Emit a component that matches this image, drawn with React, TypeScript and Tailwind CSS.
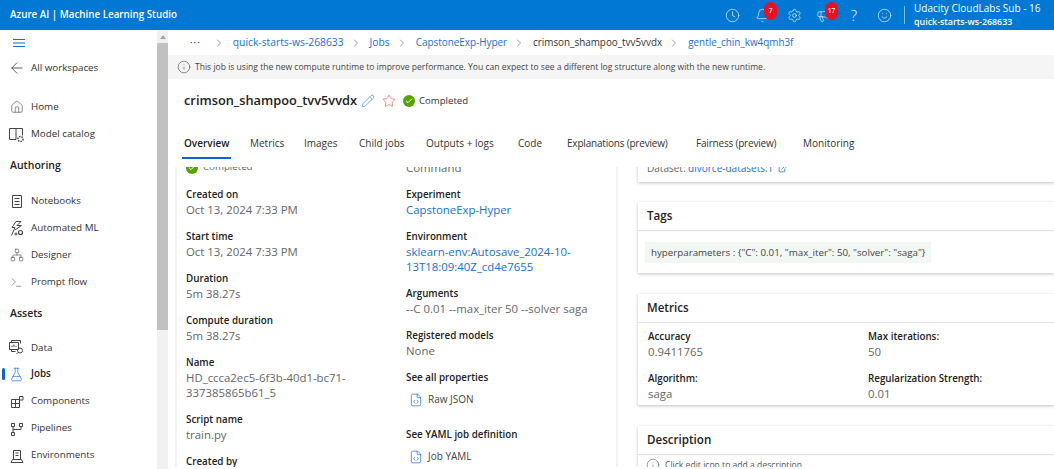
import {
  ArrowLeft,
  Bell,
  Check,
  ChevronDown,
  ChevronRight,
  Clock,
  ExternalLink,
  FileCode,
  FlaskConical,
  Home,
  Info,
  Megaphone,
  Network,
  Pencil,
  Settings,
  Smile,
  Star,
  Terminal,
} from "lucide-react";
import type { ReactNode } from "react";

const HamburgerIcon = () => (
  <svg className="ml-[13px] mt-[4px]" width="12" height="18" viewBox="0 0 12 18" fill="none" stroke="#0f62d6" strokeWidth="1">
    <path d="M0 5.5h12M0 9h12M0 12.5h12" />
  </svg>
);

const ModelCatalogIcon = () => (
  <svg width="17" height="17" viewBox="0 0 17 17" fill="none" stroke="#444" strokeWidth="1">
    <path d="M8 13.5H1.5v-11h6.5v11M8 2.5h6.5v7" />
    <circle cx="12.5" cy="13" r="2.5" strokeDasharray="1.5 1" strokeWidth="1.5" />
  </svg>
);

const NotebookIcon = () => (
  <svg width="16" height="16" viewBox="0 0 16 16" fill="none" stroke="#444" strokeWidth="1">
    <path d="M3.5 2.5h9v12h-9zM5.5 5.5h5M5.5 8.5h5M5.5 11.5h5" />
  </svg>
);

const AutomatedIcon = () => (
  <svg width="17" height="17" viewBox="0 0 17 17" fill="none" stroke="#444" strokeWidth="1">
    <path d="M8 1.5 4 7.5h3l-3.5 8M8 1.5h5l-4 4h4.5L7 10" />
    <circle cx="12.5" cy="12.5" r="2" strokeWidth="1.2" />
    <circle cx="8" cy="14" r="1" />
  </svg>
);

const DataIcon = () => (
  <svg width="17" height="17" viewBox="0 0 17 17" fill="none" stroke="#444" strokeWidth="1">
    <path d="M3.5 3.5v-2h9v3M1.5 3.5h9v7h-9zM3.5 10.5v2h4M4 8V6.5M6 8V5.5M8 8V7" />
    <circle cx="12" cy="11.5" r="2.5" />
    <path d="M10 13.5 8.5 15" />
  </svg>
);

const ComponentsIcon = () => (
  <svg width="16" height="16" viewBox="0 0 16 16" fill="none" stroke="#444" strokeWidth="1">
    <path d="M2.5 5.5h8v8h-8zM6.5 5.5v8M2.5 9.5h8M10.5 2.5h3.5v3.5h-3.5z" />
  </svg>
);

const PipelinesIcon = () => (
  <svg width="16" height="16" viewBox="0 0 16 16" fill="none" stroke="#444" strokeWidth="1">
    <path d="M2.5 2.5h3v3h-3zM10.5 2.5h3v3h-3zM2.5 11.5h3v3h-3zM4 5.5v6M4 8.5h8v-3" />
  </svg>
);

const EnvironmentsIcon = () => (
  <svg width="16" height="16" viewBox="0 0 16 16" fill="none" stroke="#444" strokeWidth="1">
    <path d="M4.5 2.5h7v9h-7zM6.5 5h3M6.5 7.5h3M2 14.5h12l-1.5-3h-9z" />
  </svg>
);

type NavItemProps = { icon: ReactNode; label: string; active?: boolean };

const NavItem = ({ icon, label, active }: NavItemProps) => (
  <div className="relative flex h-[27px] items-center pl-[7px]">
    {active && <div className="absolute left-[2px] top-[7px] h-[12px] w-[3px] rounded-full bg-[#0f62d6]" />}
    <div className="flex w-[19px] justify-center">{icon}</div>
    <span className={`ml-[5px] text-[9.8px] ${active ? "font-semibold text-[#222]" : "text-[#333]"}`}>{label}</span>
  </div>
);

const Sidebar = () => (
  <div className="flex w-[157px] shrink-0 flex-col">
    <HamburgerIcon />
    <div className="mt-[8px] flex h-[16px] items-center pl-[8px]">
      <ArrowLeft size={18} strokeWidth={1} className="text-[#333]" />
      <span className="ml-[5px] text-[9.8px] text-[#333]">All workspaces</span>
    </div>
    <div className="mt-[18px]">
      <NavItem icon={<Home size={14} strokeWidth={1} className="text-[#444]" />} label="Home" />
      <NavItem icon={<ModelCatalogIcon />} label="Model catalog" />
    </div>
    <div className="mb-[15px] mt-[10px] pl-[10px] text-[10.5px] font-semibold leading-[15px] text-[#222]">Authoring</div>
    <NavItem icon={<NotebookIcon />} label="Notebooks" />
    <NavItem icon={<AutomatedIcon />} label="Automated ML" />
    <NavItem icon={<Network size={14} strokeWidth={1} className="text-[#444]" />} label="Designer" />
    <NavItem icon={<Terminal size={13} strokeWidth={1} className="text-[#444]" />} label="Prompt flow" />
    <div className="mb-[14px] mt-[10px] pl-[10px] text-[10.5px] font-semibold leading-[15px] text-[#222]">Assets</div>
    <NavItem icon={<DataIcon />} label="Data" />
    <NavItem icon={<FlaskConical size={15} strokeWidth={1} className="text-[#0f62d6]" />} label="Jobs" active />
    <NavItem icon={<ComponentsIcon />} label="Components" />
    <NavItem icon={<PipelinesIcon />} label="Pipelines" />
    <NavItem icon={<EnvironmentsIcon />} label="Environments" />
  </div>
);

const Field = ({ label, children }: { label: string; children: ReactNode }) => (
  <div className="mb-[12px] leading-[15px]">
    <div className="text-[9.8px] font-semibold text-[#222]">{label}</div>
    <div className="text-[11.4px] text-[#666]">{children}</div>
  </div>
);

const Link = ({ children }: { children: ReactNode }) => <span className="text-[#1a6ed8]">{children}</span>;

const Crumb = ({ children, current, wide }: { children: ReactNode; current?: boolean; wide?: boolean }) => (
  <>
    <ChevronRight size={12} strokeWidth={1} className="ml-[6px] shrink-0 text-[#333]" />
    <span className={`ml-[8px] ${current ? "text-[#333]" : ""} ${wide ? "text-[10.3px]" : ""}`}>{children}</span>
  </>
);

const FileLink = ({ label }: { label: string }) => (
  <div className="flex h-[15px] items-center pl-[3px] text-[10px] text-[#444]">
    <FileCode size={14} strokeWidth={1.2} className="text-[#1a6ed8]" />
    <span className="ml-[5px]">{label}</span>
  </div>
);

const Card = ({ title, className, children }: { title: string; className: string; children: ReactNode }) => (
  <div className={`mb-[21px] bg-white shadow-[0_1px_3px_rgba(0,0,0,0.25)] ${className}`}>
    <div className="flex h-[29px] items-center border-b border-[#e1dfdd] pl-[9px] text-[11.6px] font-semibold text-[#222]">
      {title}
    </div>
    {children}
  </div>
);

const tabs = [
  "Overview",
  "Metrics",
  "Images",
  "Child jobs",
  "Outputs + logs",
  "Code",
  "Explanations (preview)",
  "Fairness (preview)",
  "Monitoring",
];

const Badge = ({ children }: { children: ReactNode }) => (
  <span className="absolute left-[17px] top-[2px] flex h-[18px] w-[13px] items-center justify-center rounded-full bg-[#e81123] text-[6.5px] font-semibold">
    {children}
  </span>
);

export default function App() {
  return (
    <div className="flex h-[469px] w-[1054px] flex-col overflow-hidden bg-white font-['Open_Sans',sans-serif]">
      <header className="flex h-[30px] shrink-0 items-center bg-[#0078d4] pl-[10px] text-white">
        <span className="text-[9.8px] font-semibold">Azure AI | Machine Learning Studio</span>
        <div className="ml-auto flex h-[30px] w-[337px] shrink-0 items-center overflow-hidden">
          <div className="flex w-[30px] shrink-0 justify-center">
            <Clock size={15} strokeWidth={1} />
          </div>
          <div className="relative flex h-[30px] w-[30px] shrink-0 items-center justify-center">
            <Bell size={15} strokeWidth={1} />
            <Badge>7</Badge>
          </div>
          <div className="ml-[2px] flex w-[30px] shrink-0 justify-center">
            <Settings size={15} strokeWidth={1} />
          </div>
          <div className="relative -ml-[1px] flex h-[30px] w-[30px] shrink-0 items-center justify-center">
            <Megaphone size={15} strokeWidth={1} />
            <Badge>17</Badge>
          </div>
          <div className="ml-[1px] flex w-[30px] shrink-0 justify-center text-[15px] font-light">?</div>
          <div className="flex w-[30px] shrink-0 justify-center">
            <Smile size={15} strokeWidth={1} />
          </div>
          <div className="ml-[5px] h-[18px] w-px shrink-0 bg-[#7fb9e8]" />
          <div className="ml-[9px] w-[137px] shrink-0 whitespace-nowrap leading-[14px]">
            <div className="text-[10px]">Udacity CloudLabs Sub - 16</div>
            <div className="text-[8.9px] font-semibold">quick-starts-ws-268633</div>
          </div>
          <ChevronDown size={10} strokeWidth={1} className="shrink-0" />
        </div>
      </header>
      <div className="flex min-h-0 flex-1">
        <Sidebar />
        <div className="flex w-[11px] shrink-0 flex-col bg-[#f1f1f1]">
          <div className="flex h-[13px] items-center justify-center">
            <div className="border-x-[3px] border-b-[4px] border-x-transparent border-b-[#a3a3a3]" />
          </div>
          <div className="h-[287px] bg-[#c1c1c1]" />
        </div>
        <main className="flex min-w-0 flex-1 flex-col">
          <div className="flex h-[25px] shrink-0 items-center pl-[22px] text-[9.9px] text-[#1a6ed8]">
            <span className="tracking-[1px] text-[#333]">···</span>
            <ChevronRight size={12} strokeWidth={1} className="ml-[12px] shrink-0 text-[#333]" />
            <span className="ml-[8px] text-[10.3px]">quick-starts-ws-268633</span>
            <Crumb wide>Jobs</Crumb>
            <Crumb>CapstoneExp-Hyper</Crumb>
            <Crumb current>crimson_shampoo_tvv5vvdx</Crumb>
            <Crumb>gentle_chin_kw4qmh3f</Crumb>
          </div>
          <div className="flex h-[24px] shrink-0 items-center bg-[#f5f5f5] pl-[9px] text-[8.55px] text-[#444]">
            <Info size={14} strokeWidth={1} />
            <span className="ml-[4px]">
              This job is using the new compute runtime to improve performance. You can expect to see a different log structure along with the new runtime.
            </span>
          </div>
          <div className="flex h-[44px] shrink-0 items-center pl-[16px]">
            <span className="text-[12.8px] font-semibold text-[#222]">crimson_shampoo_tvv5vvdx</span>
            <Pencil size={14} strokeWidth={1} className="ml-[4px] text-[#1a6ed8]" />
            <Star size={14} strokeWidth={1} className="ml-[7px] text-[#d9492e]" />
            <div className="ml-[7px] flex size-[12px] items-center justify-center rounded-full bg-[#57a300]">
              <Check size={8} strokeWidth={3} className="text-white" />
            </div>
            <span className="ml-[4px] text-[9.6px] text-[#333]">Completed</span>
          </div>
          <div className="grid h-[44px] shrink-0 grid-cols-[66px_54px_55px_67px_92px_49px_129px_107px_auto] items-start pl-[16px] pt-[13px] text-[10px] leading-[15px] text-[#333]">
            {tabs.map((tab, i) => (
              <div key={tab} className={tab.includes("preview") ? "tracking-[-0.2px]" : ""}>
                <span
                  className={
                    i === 0
                      ? "-mx-[2px] inline-block border-b-[2px] border-[#0f62d6] px-[2px] pb-[6px] font-semibold text-[#222]"
                      : "whitespace-nowrap"
                  }
                >
                  {tab}
                </span>
              </div>
            ))}
          </div>
          <div className="flex h-[300px] shrink-0 overflow-hidden pl-[7px]">
            <div className="flex w-[443px] shrink-0 border-x-2 border-[#f3f3f3] pl-[9px]">
              <div className="-mt-[7px] w-[220px]">
                <div className="mb-[12px] flex h-[15px] items-center text-[9.7px] text-[#666]">
                  <div className="mr-[5px] flex size-[12px] items-center justify-center rounded-full bg-[#57a300]">
                    <Check size={8} strokeWidth={3} className="text-white" />
                  </div>
                  Completed
                </div>
                <Field label="Created on">Oct 13, 2024 7:33 PM</Field>
                <Field label="Start time">Oct 13, 2024 7:33 PM</Field>
                <Field label="Duration">5m 38.27s</Field>
                <Field label="Compute duration">5m 38.27s</Field>
                <Field label="Name">
                  HD_ccca2ec5-6f3b-40d1-bc71-
                  <br />
                  337385865b61_5
                </Field>
                <Field label="Script name">train.py</Field>
                <Field label="Created by">Udacity</Field>
              </div>
              <div className="-mt-[7px] w-[210px]">
                <div className="mb-[12px] h-[15px] text-[11.4px] leading-[15px] text-[#666]">Command</div>
                <Field label="Experiment">
                  <Link>CapstoneExp-Hyper</Link>
                </Field>
                <Field label="Environment">
                  <Link>
                    sklearn-env:Autosave_2024-10-
                    <br />
                    13T18:09:40Z_cd4e7655
                  </Link>
                </Field>
                <Field label="Arguments">--C 0.01 --max_iter 50 --solver saga</Field>
                <Field label="Registered models">None</Field>
                <div className="mb-[7px] text-[9.8px] font-semibold leading-[15px] text-[#222]">See all properties</div>
                <FileLink label="Raw JSON" />
                <div className="mb-[7px] mt-[20px] text-[9.8px] font-semibold leading-[15px] text-[#222]">See YAML job definition</div>
                <FileLink label="Job YAML" />
              </div>
            </div>
            <div className="min-w-0 flex-1 pl-[20px]">
              <div className="-mt-[7px] mb-[20px] bg-white pb-[6px] pl-[9px] pt-[1px] shadow-[0_1px_3px_rgba(0,0,0,0.25)]">
                <div className="flex items-center whitespace-nowrap text-[10px] leading-[15px] text-[#666]">
                  Dataset:&nbsp;<Link>divorce-datasets:1</Link>
                  <ExternalLink size={9} className="ml-[5px] text-[#1a6ed8]" />
                </div>
              </div>
              <Card title="Tags" className="h-[71px]">
                <div className="px-[7px] pt-[11px]">
                  <span className="block h-[21px] w-fit bg-[#f3f7f4] px-[6px] text-[9.75px] leading-[21px] text-[#444]">
                    hyperparameters : {'{"C": 0.01, "max_iter": 50, "solver": "saga"}'}
                  </span>
                </div>
              </Card>
              <Card title="Metrics" className="h-[111px]">
                <div className="grid grid-cols-[220px_1fr] pl-[10px] pt-[6px]">
                  <Field label="Accuracy">0.9411765</Field>
                  <Field label="Max iterations:">50</Field>
                  <Field label="Algorithm:">saga</Field>
                  <Field label="Regularization Strength:">0.01</Field>
                </div>
              </Card>
              <Card title="Description" className="h-[60px]">
                <div className="flex items-center pl-[8px] pt-[3px] text-[8.6px] text-[#555]">
                  <Info size={14} strokeWidth={1} />
                  <span className="ml-[5px]">Click edit icon to add a description</span>
                </div>
              </Card>
            </div>
          </div>
        </main>
      </div>
    </div>
  );
}
